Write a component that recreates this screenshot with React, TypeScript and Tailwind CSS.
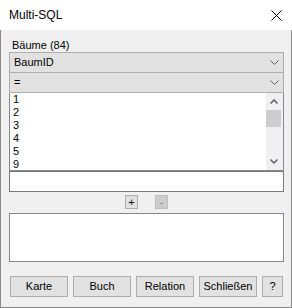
import React from "react";

const ui = { fontFamily: '"Liberation Sans", Arial, sans-serif' };

function Chevron() {
  return (
    <svg width="9" height="5" viewBox="0 0 9 5" className="shrink-0">
      <polyline points="0.5,0.5 4.5,4.5 8.5,0.5" fill="none" stroke="#606060" strokeWidth="1" />
    </svg>
  );
}

function Combo({ value, first }: { value: string; first?: boolean }) {
  return (
    <div
      className={
        first
          ? "flex h-[21px] items-center justify-between border border-[#adadad] bg-[#e1e1e1] pl-[4px] pr-[4px]"
          : "flex h-[20px] items-center justify-between border-x border-b border-[#adadad] bg-[#e1e1e1] pl-[4px] pr-[4px]"
      }
    >
      <span className="text-[11px] leading-[13px] text-black">{value}</span>
      <Chevron />
    </div>
  );
}

function Btn({ label, w }: { label: string; w: string }) {
  return (
    <div className={`flex h-[21px] items-center justify-center border border-[#adadad] bg-[#e1e1e1] text-[11px] text-black ${w}`}>
      {label}
    </div>
  );
}

export default function App() {
  const items = ["1", "2", "3", "4", "5", "9"];
  return (
    <div className="flex h-[308px] w-[292px] flex-col bg-white" style={ui}>
      <div className="flex h-[30px] items-center justify-between bg-white pl-[9px] pr-[10px]">
        <span className="text-[12px] text-black">Multi-SQL</span>
        <svg width="11" height="11" viewBox="0 0 11 11">
          <path d="M0.5 0.5 L10.5 10.5 M10.5 0.5 L0.5 10.5" stroke="#000" strokeWidth="1" />
        </svg>
      </div>
      <div className="flex flex-1 flex-col border-x border-b border-[#8a8a8a] bg-[#f0f0f0] pl-[8px] pr-[7px] pt-[9px]">
        <div className="h-[13px] pl-[3px] text-[11px] leading-[13px] text-black">Bäume (84)</div>
        <Combo value="BaumID" first />
        <Combo value="=" />
        <div className="flex h-[78px] border-x border-b border-[#828790] bg-white">
          <div className="flex-1 overflow-hidden pl-[3px]">
            {items.map((n) => (
              <div key={n} className="h-[13px] text-[11px] leading-[13px] text-black">
                {n}
              </div>
            ))}
          </div>
          <div className="flex w-[17px] flex-col bg-[#f0f0f0]">
            <div className="flex h-[17px] items-center justify-center pr-[1px]">
              <svg width="8" height="5" viewBox="0 0 8 5">
                <polyline points="0.5,4.5 4,1 7.5,4.5" fill="none" stroke="#606060" strokeWidth="1.5" />
              </svg>
            </div>
            <div className="mr-[2px] h-[17px] bg-[#cdcdcd]" />
            <div className="flex-1" />
            <div className="flex h-[17px] items-center justify-center pr-[1px]">
              <svg width="8" height="5" viewBox="0 0 8 5">
                <polyline points="0.5,0.5 4,4 7.5,0.5" fill="none" stroke="#606060" strokeWidth="1.5" />
              </svg>
            </div>
          </div>
        </div>
        <div className="h-[21px] border border-[#7a7a7a] bg-white" />
        <div className="mt-[3px] flex justify-center gap-[17px]">
          <div className="flex h-[14px] w-[13px] items-center justify-center border border-[#adadad] bg-[#e1e1e1] text-[11px] leading-none text-black">
            +
          </div>
          <div className="flex h-[14px] w-[13px] items-center justify-center border border-[#bfbfbf] bg-[#cccccc] text-[11px] leading-none text-[#838383]">
            -
          </div>
        </div>
        <div className="mt-[4px] h-[49px] border border-[#828790] bg-white" />
        <div className="mt-[14px] flex gap-[5px] px-[1px]">
          <Btn label="Karte" w="w-[58px]" />
          <Btn label="Buch" w="w-[58px]" />
          <Btn label="Relation" w="w-[58px]" />
          <Btn label="Schließen" w="w-[58px]" />
          <Btn label="?" w="w-[21px]" />
        </div>
      </div>
    </div>
  );
}
